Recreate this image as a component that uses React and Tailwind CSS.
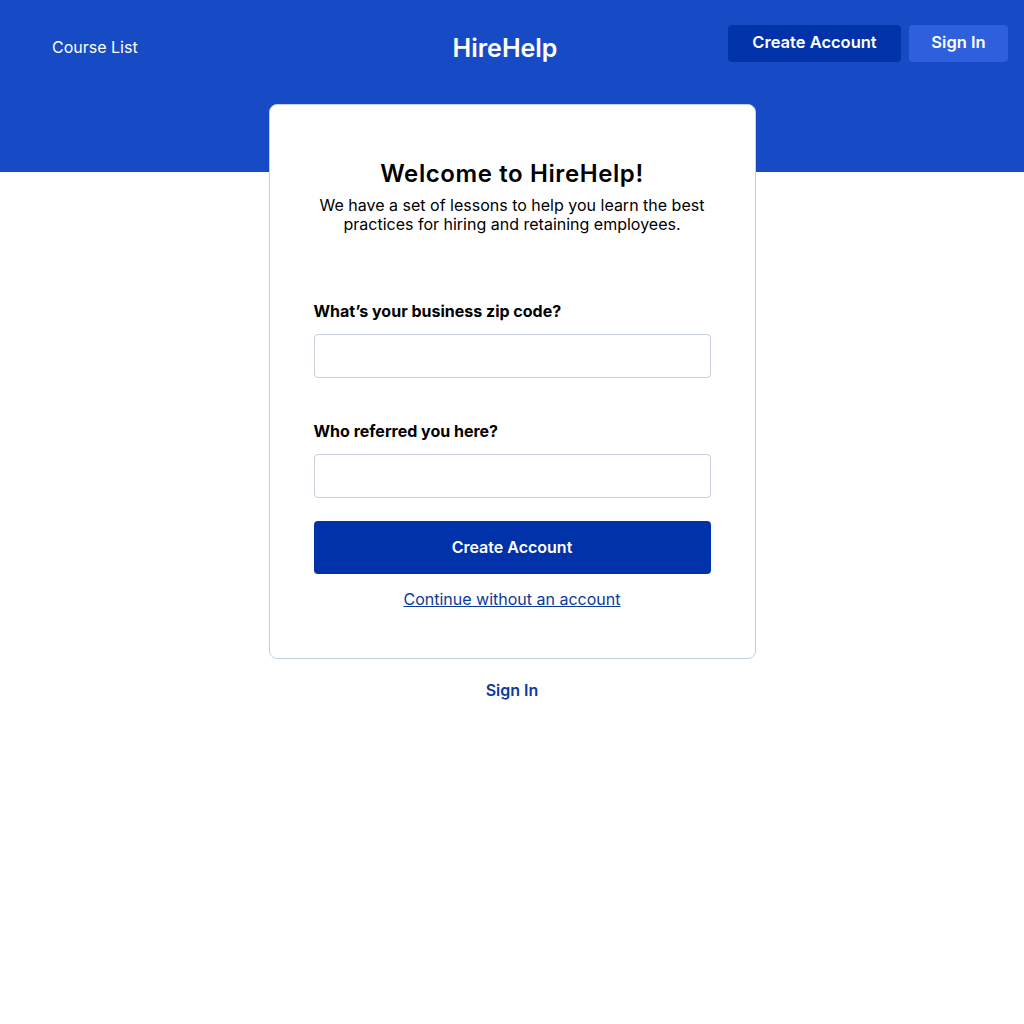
import React from "react";

const App = () => {
  return (
    <div className="min-h-screen bg-white font-['Inter','Noto_Sans',sans-serif] text-black">
      {/* Header band */}
      <header className="h-[172px] bg-[#174ac5]">
        <nav className="flex items-start pl-[52px] pr-4 pt-[25px]">
          <div className="flex-1 pt-[10px]">
            <a href="#" className="text-base text-white">
              Course List
            </a>
          </div>
          <div className="ml-[-50px] pt-[5px] text-[25px] font-semibold text-white">
            HireHelp
          </div>
          <div className="flex flex-1 justify-end gap-2">
            <button className="h-[37px] w-[173px] rounded bg-[#0033a9] pb-[3px] text-[16.5px] font-semibold text-white">
              Create Account
            </button>
            <button className="h-[37px] w-[99px] rounded bg-[#2e60dd] pb-[3px] text-[16.5px] font-semibold text-white">
              Sign In
            </button>
          </div>
        </nav>
      </header>

      {/* Card */}
      <main className="flex flex-col items-center -mt-[68px]">
        <div className="w-[487px] rounded-lg border border-[#c5d0de] bg-white px-[44px] pt-[54px] pb-[47px]">
          <h1 className="text-center text-2xl font-semibold leading-[30px] tracking-[0.025em]">
            Welcome to HireHelp!
          </h1>
          <p className="mt-[7px] text-center text-base leading-[19px]">
            We have a set of lessons to help you learn the best practices for
            hiring and retaining employees.
          </p>

          <label className="mt-[65px] block text-base font-bold">
            What’s your business zip code?
          </label>
          <input
            type="text"
            className="mt-[11px] block h-[44px] w-full rounded border border-[#c8d0dc] px-3"
          />

          <label className="mt-[41px] block text-base font-bold">
            Who referred you here?
          </label>
          <input
            type="text"
            className="mt-[11px] block h-[44px] w-full rounded border border-[#c8d0dc] px-3"
          />

          <button className="mt-[23px] h-[53px] w-full rounded bg-[#0033aa] pb-[2px] text-base font-semibold text-white">
            Create Account
          </button>
          <div className="mt-[13px] text-center">
            <a href="#" className="text-base text-[#0a3a9b] underline">
              Continue without an account
            </a>
          </div>
        </div>

        <a href="#" className="mt-[19px] text-base font-semibold text-[#0b3a9c]">
          Sign In
        </a>
      </main>
    </div>
  );
};

export default App;
